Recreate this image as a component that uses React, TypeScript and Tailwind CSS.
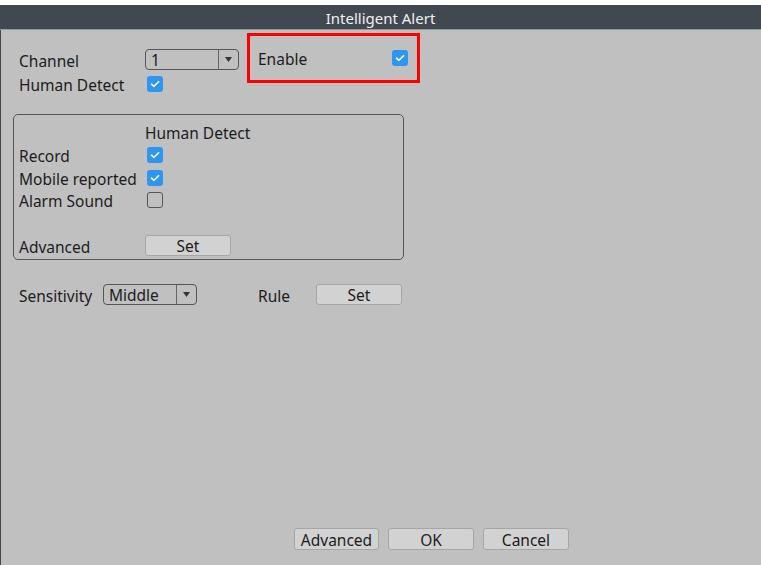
import React from "react";

const font = { fontFamily: '"Noto Sans", "Open Sans", sans-serif' };

function Check({ on }: { on: boolean }) {
  if (!on) {
    return <div className="w-[16px] h-[16px] rounded-[3px] border border-[#555]" />;
  }
  return (
    <div className="w-[16px] h-[16px] rounded-[3px] bg-[#2d96f0] flex items-center justify-center">
      <svg width="10" height="8" viewBox="0 0 10 8">
        <path d="M1.5 4.2 L4 6.3 L8.6 1.8" fill="none" stroke="#fff" strokeWidth="1.6" strokeLinecap="round" strokeLinejoin="round" />
      </svg>
    </div>
  );
}

function Select({ value, w }: { value: string; w: string }) {
  return (
    <div className={`${w} h-[21px] rounded-[4px] border border-[#555] flex items-stretch`}>
      <div className="flex-1 flex items-center pl-[5px] pt-[3px] leading-none text-[15.5px]">{value}</div>
      <div className="w-[20px] border-l border-[#666] flex items-center justify-center">
        <svg width="7" height="5" viewBox="0 0 7 5">
          <path d="M0 0 L7 0 L3.5 5 Z" fill="#333" />
        </svg>
      </div>
    </div>
  );
}

function Btn({ label, w, h = "h-[22px]" }: { label: string; w: string; h?: string }) {
  return (
    <div className={`${w} ${h} rounded-[3px] border border-[#a6a6a6] bg-[#d2d2d2] flex items-center justify-center pt-[3px] text-[15.5px] leading-none`}>
      {label}
    </div>
  );
}

const lbl = "text-[15.5px] leading-none pt-[4px]";

export default function App() {
  return (
    <div className="w-[761px] h-[565px] bg-white pt-[5px] flex flex-col text-[#1c1c1c]" style={font}>
      <div className="h-[24px] bg-[#414850] flex items-center justify-center pt-[2px] text-[#eef0f2] text-[15px] leading-none">
        Intelligent Alert
      </div>
      <div className="h-[1px] bg-[#8d99a3]" />
      <div className="flex-1 bg-[#c0c0c0] border-l border-[#414850] flex flex-col">
        {/* top section */}
        <div className="mt-[3px] flex items-start">
          <div className="pl-[18px] w-[246px] pt-[16px] flex flex-col">
            <div className="h-[21px] flex items-center">
              <div className={`w-[126px] ${lbl}`}>Channel</div>
              <Select value="1" w="w-[94px]" />
            </div>
            <div className="mt-[3px] h-[22px] flex items-center">
              <div className={`w-[128px] ${lbl}`}>Human Detect</div>
              <Check on />
            </div>
          </div>
          <div className="w-[173px] h-[50px] border-[3px] border-[#ff0000] flex items-center pl-[8px]">
            <div className={`w-[134px] ${lbl}`}>Enable</div>
            <Check on />
          </div>
        </div>

        {/* group box */}
        <div className="mt-[19px] ml-[12px] w-[391px] h-[146px] rounded-[5px] border border-[#555] pl-[5px] pt-[6px] flex flex-col">
          <div className="h-[22px] flex items-center">
            <div className="w-[126px]" />
            <div className={lbl}>Human Detect</div>
          </div>
          <div className="h-[23px] flex items-center">
            <div className={`w-[128px] ${lbl}`}>Record</div>
            <Check on />
          </div>
          <div className="h-[23px] flex items-center">
            <div className={`w-[128px] ${lbl}`}>Mobile reported</div>
            <Check on />
          </div>
          <div className="h-[22px] flex items-center">
            <div className={`w-[128px] ${lbl}`}>Alarm Sound</div>
            <Check on={false} />
          </div>
          <div className="mt-[24px] h-[21px] flex items-center">
            <div className={`w-[126px] ${lbl}`}>Advanced</div>
            <Btn label="Set" w="w-[86px]" h="h-[21px]" />
          </div>
        </div>

        {/* sensitivity row */}
        <div className="mt-[24px] pl-[18px] h-[21px] flex items-center">
          <div className={`w-[84px] ${lbl}`}>Sensitivity</div>
          <Select value="Middle" w="w-[94px]" />
          <div className={`ml-[61px] w-[58px] ${lbl}`}>Rule</div>
          <Btn label="Set" w="w-[86px]" h="h-[21px]" />
        </div>

        {/* bottom buttons */}
        <div className="mt-auto mb-[15px] ml-[293px] flex items-center gap-[9px]">
          <Btn label="Advanced" w="w-[85px]" />
          <Btn label="OK" w="w-[86px]" />
          <Btn label="Cancel" w="w-[86px]" />
        </div>
      </div>
    </div>
  );
}
